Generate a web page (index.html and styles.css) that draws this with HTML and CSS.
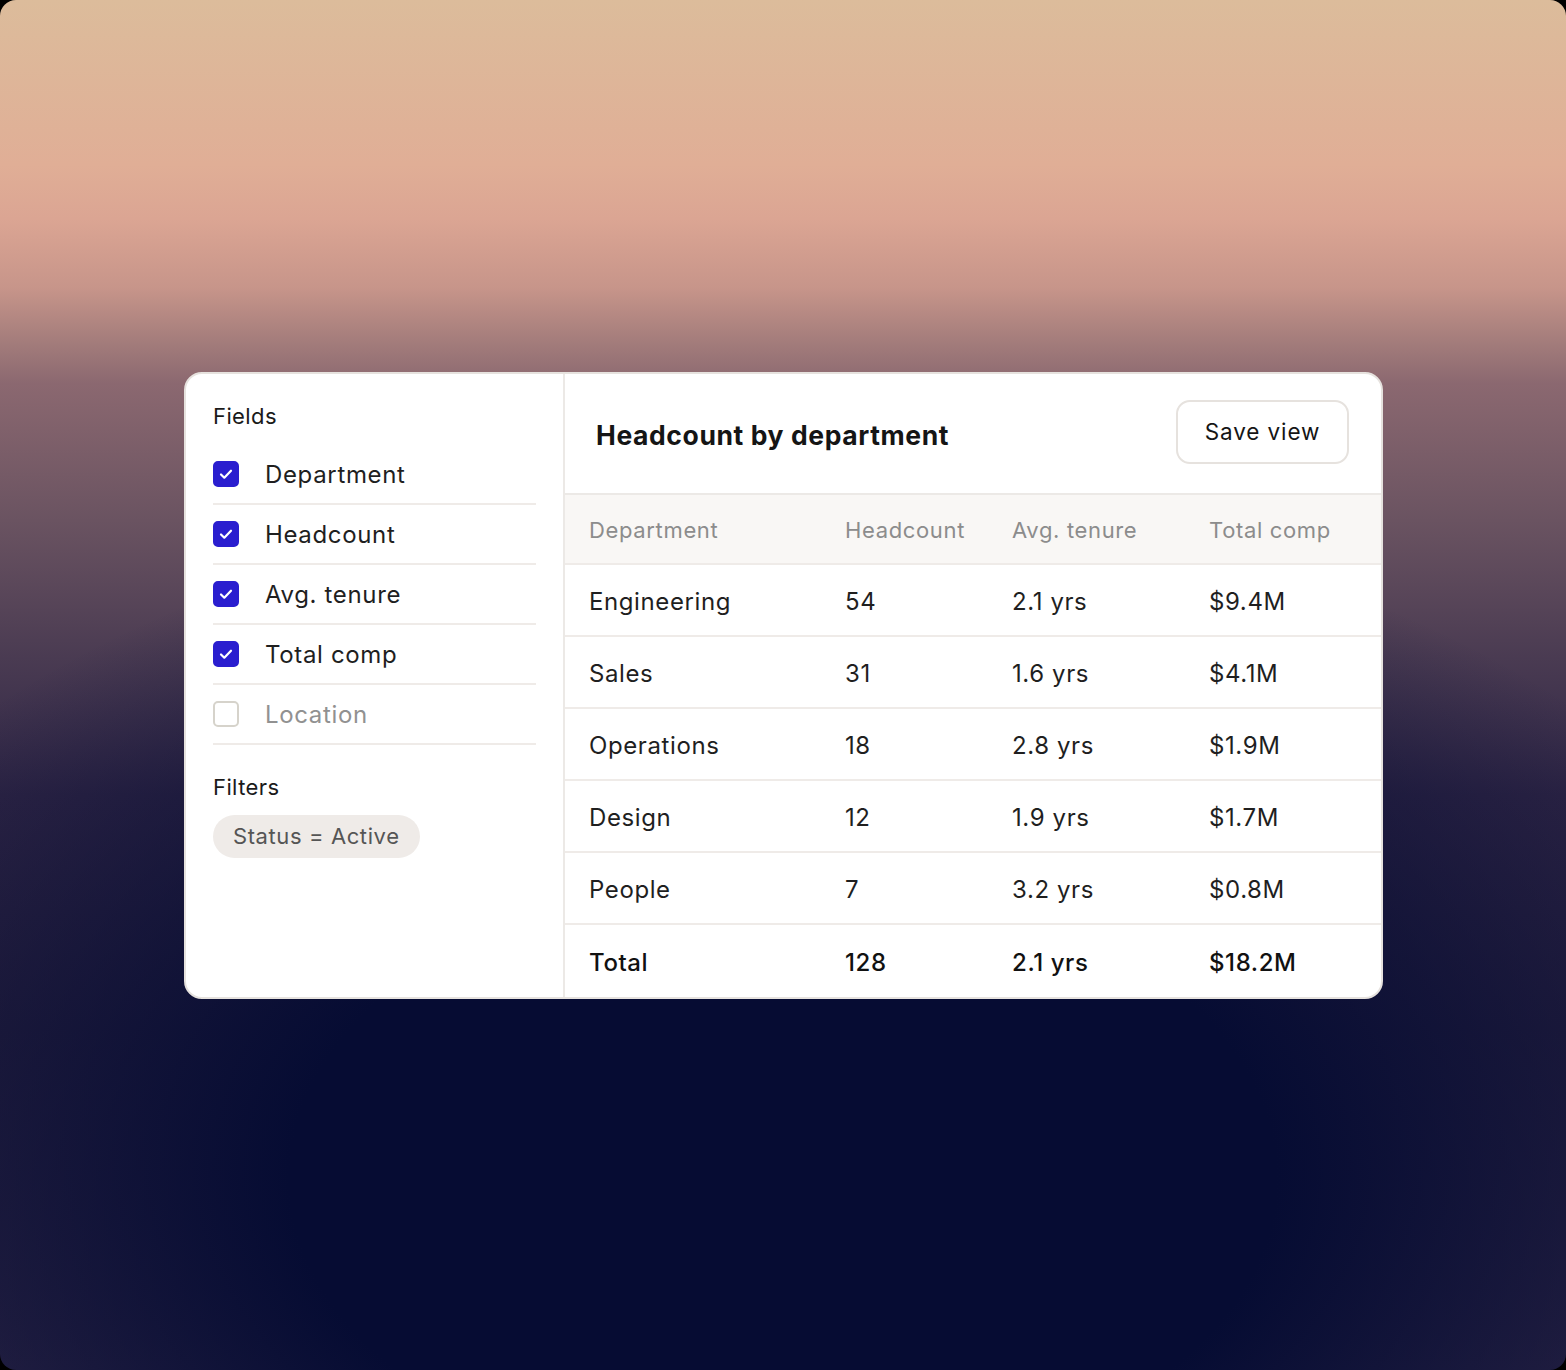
FILE: index.html
```html
<!DOCTYPE html>
<html>
<head>
<meta charset="utf-8">
<link rel="stylesheet" href="styles.css">
</head>
<body>
<div class="stage">
  <div class="card">
    <aside class="side">
      <div class="side-title">Fields</div>
      <ul class="fields">
        <li class="field"><span class="cb on"><svg viewBox="0 0 26 26"><path d="M8 13.5l3.3 3.2 6.7-7" /></svg></span><span>Department</span></li>
        <li class="field"><span class="cb on"><svg viewBox="0 0 26 26"><path d="M8 13.5l3.3 3.2 6.7-7" /></svg></span><span>Headcount</span></li>
        <li class="field"><span class="cb on"><svg viewBox="0 0 26 26"><path d="M8 13.5l3.3 3.2 6.7-7" /></svg></span><span>Avg. tenure</span></li>
        <li class="field"><span class="cb on"><svg viewBox="0 0 26 26"><path d="M8 13.5l3.3 3.2 6.7-7" /></svg></span><span>Total comp</span></li>
        <li class="field off"><span class="cb"></span><span>Location</span></li>
      </ul>
      <div class="side-title filters-title">Filters</div>
      <span class="pill">Status = Active</span>
    </aside>
    <main class="main">
      <header class="head">
        <h1 class="title">Headcount by department</h1>
        <button class="btn">Save view</button>
      </header>
      <div class="table">
        <div class="row thead"><span>Department</span><span>Headcount</span><span>Avg. tenure</span><span>Total comp</span></div>
        <div class="row"><span>Engineering</span><span>54</span><span>2.1 yrs</span><span>$9.4M</span></div>
        <div class="row"><span>Sales</span><span>31</span><span>1.6 yrs</span><span>$4.1M</span></div>
        <div class="row"><span>Operations</span><span>18</span><span>2.8 yrs</span><span>$1.9M</span></div>
        <div class="row"><span>Design</span><span>12</span><span>1.9 yrs</span><span>$1.7M</span></div>
        <div class="row"><span>People</span><span>7</span><span>3.2 yrs</span><span>$0.8M</span></div>
        <div class="row total"><span>Total</span><span>128</span><span>2.1 yrs</span><span>$18.2M</span></div>
      </div>
    </main>
  </div>
</div>
</body>
</html>
```
FILE: styles.css
```css
* { box-sizing: border-box; }
html, body { margin: 0; padding: 0; background: #000; }
body { font-family: Inter, "Noto Sans", sans-serif; color: #1a1a1a; }

.stage {
  width: 1566px;
  height: 1370px;
  border-radius: 16px;
  overflow: hidden;
  padding-top: 372px;
  padding-left: 184px;
  background:
    radial-gradient(ellipse 70% 50% at 50% 86%, #060c33 0%, #060c33 45%, rgba(6,12,51,0) 100%),
    linear-gradient(180deg, #dcbc9b 0%, #e0ae96 12%, #dba593 16%, #c7958a 21%, #a37c7b 25%, #8b6870 28%, #6a5361 38%, #4a3b52 48%, #2e2545 58%, #28213f 75%, #302848 100%);
}

.card {
  width: 1199px;
  height: 627px;
  background: #fff;
  border: 2px solid #e6e2de;
  border-radius: 18px;
  display: flex;
  overflow: hidden;
}

.side {
  width: 379px;
  flex: none;
  border-right: 2px solid #ece9e6;
  padding: 28px 27px 0 27px;
}

.side-title {
  font-size: 22px;
  line-height: 28px;
  color: #1a1a1a;
  letter-spacing: 0.4px;
}

.fields {
  list-style: none;
  margin: 15px 0 0 0;
  padding: 0;
}

.field {
  display: flex;
  align-items: center;
  gap: 26px;
  height: 60px;
  border-bottom: 2px solid #efebe8;
  font-size: 24px;
  letter-spacing: 0.65px;
  color: #1f1f1f;
}

.field.off { color: #919191; }

.cb {
  width: 26px;
  height: 26px;
  flex: none;
  border-radius: 5px;
  border: 2px solid #d6d3cb;
  background: #fff;
  display: flex;
  align-items: center;
  justify-content: center;
}

.cb.on {
  background: #2a1ecf;
  border-color: #2a1ecf;
}

.cb svg {
  width: 26px;
  height: 26px;
  flex: none;
  fill: none;
  stroke: #fff;
  stroke-width: 2.2;
  stroke-linecap: round;
  stroke-linejoin: round;
}

.filters-title { margin-top: 28px; }

.pill {
  display: inline-block;
  margin-top: 14px;
  background: #efebe8;
  color: #555;
  font-size: 22px;
  letter-spacing: 0.6px;
  line-height: 43px;
  height: 43px;
  padding: 0 20px;
  border-radius: 22px;
}

.main {
  flex: 1;
  display: flex;
  flex-direction: column;
}

.head {
  height: 121px;
  display: flex;
  align-items: center;
  justify-content: space-between;
  padding: 0 32px 0 31px;
  border-bottom: 2px solid #ece9e6;
}

.title {
  margin: 0;
  margin-top: 3px;
  font-size: 26.5px;
  font-weight: 700;
  color: #151515;
  letter-spacing: 0.6px;
}

.btn {
  font-family: inherit;
  font-size: 22.5px;
  letter-spacing: 0.9px;
  color: #151515;
  background: #fff;
  border: 2px solid #e6e2de;
  border-radius: 14px;
  width: 173px;
  height: 64px;
  margin-top: -4px;
  cursor: pointer;
}

.table { display: flex; flex-direction: column; }

.row {
  display: grid;
  grid-template-columns: 256px 167px 197px 1fr;
  align-items: center;
  height: 72px;
  padding-left: 24px;
  border-bottom: 2px solid #efebe8;
  font-size: 24px;
  letter-spacing: 0.6px;
  color: #1f1f1f;
}

.row > span { padding-top: 2px; }

.row.thead {
  height: 70px;
  background: #f9f7f5;
  font-size: 22px;
  letter-spacing: 0.65px;
  color: #8c8c8c;
}

.row.total {
  border-bottom: none;
  font-weight: 500;
  color: #111;
}
```
